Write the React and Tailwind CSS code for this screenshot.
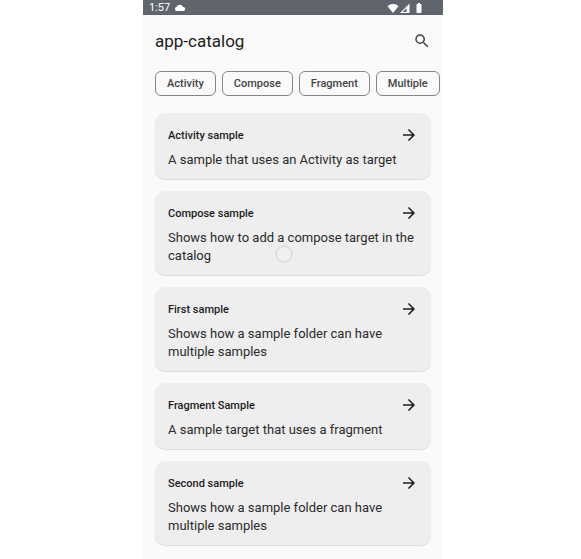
import React from 'react';
import { MdArrowForward, MdBatteryFull, MdSearch } from 'react-icons/md';

const filters = ['Activity', 'Compose', 'Fragment', 'Multiple'];

const samples = [
  { name: 'Activity sample', description: 'A sample that uses an Activity as target' },
  { name: 'Compose sample', description: 'Shows how to add a compose target in the catalog', touched: true },
  { name: 'First sample', description: 'Shows how a sample folder can have multiple samples' },
  { name: 'Fragment Sample', description: 'A sample target that uses a fragment' },
  { name: 'Second sample', description: 'Shows how a sample folder can have multiple samples' },
];

function StatusBar() {
  return (
    <div className="flex h-[15px] items-center justify-between bg-[#5f646d] pl-1.5 pr-[18px] text-white">
      <div className="flex items-center gap-1">
        <span className="text-[11px] leading-4">1:57</span>
        <svg viewBox="0 0 12 12" className="h-3 w-3" fill="currentColor">
          <path d="M2.800 9A2.200 2.200 0 0 1 2.600 4.700 3.500 3.500 0 0 1 9 5 2 2 0 0 1 9.500 9Z" />
        </svg>
      </div>
      <div className="flex items-center">
        <svg viewBox="0 0 12 12" className="h-3 w-3" fill="currentColor">
          <path d="M6 11 .5 4.2C3.6 1.3 8.4 1.3 11.5 4.2Z" />
        </svg>
        <svg viewBox="0 0 12 12" className="h-3 w-3" fill="currentColor">
          <path fillRule="evenodd" d="M10.5 1.5V11H1ZM7.5 6 3.700 10h3.800Z" />
        </svg>
        <MdBatteryFull className="ml-0.5 h-3 w-3" />
      </div>
    </div>
  );
}

function SampleCard({ name, description, touched }) {
  return (
    <li>
      <button
        type="button"
        className="relative block w-full rounded-[10px] bg-[#eeeeee] px-[13px] pt-3 pb-2.5 text-left shadow-[0_1px_1px_rgba(0,0,0,0.12)]"
      >
        <span className="flex h-5 items-center justify-between">
          <span className="pt-0.5 text-[11px] font-medium">{name}</span>
          <MdArrowForward className="h-[18px] w-[18px]" />
        </span>
        <span className="mt-1.5 block text-[13px] leading-[18px] text-[#2b2b2b]">{description}</span>
        {touched && (
          <span className="absolute bottom-3 left-[120px] h-[18px] w-[18px] rounded-full border-2 border-[#dedede] bg-[#f1f1f1]" />
        )}
      </button>
    </li>
  );
}

export default function App() {
  return (
    <div className="min-h-screen bg-white pl-[5px] font-['Roboto',sans-serif] text-[#1c1c1c]">
      <div className="mx-auto min-h-screen max-w-[300px] overflow-hidden bg-[#fafafa] pb-3">
        <StatusBar />
        <header className="flex h-[52px] items-center justify-between px-3">
          <h1 className="pt-0.5 text-[17px]">app-catalog</h1>
          <button type="button" aria-label="Search" className="text-[#444444]">
            <MdSearch className="h-[18px] w-[18px]" />
          </button>
        </header>
        <div className="mt-1 flex gap-1.5 overflow-hidden pl-3">
          {filters.map((filter) => (
            <button
              key={filter}
              type="button"
              className="h-[25px] shrink-0 rounded-md border border-[#858585] px-[11px] pt-0.5 text-[11px] font-medium text-[#444444]"
            >
              {filter}
            </button>
          ))}
        </div>
        <ul className="mt-[17px] flex flex-col gap-3 px-3">
          {samples.map((sample) => (
            <SampleCard key={sample.name} {...sample} />
          ))}
        </ul>
      </div>
    </div>
  );
}
